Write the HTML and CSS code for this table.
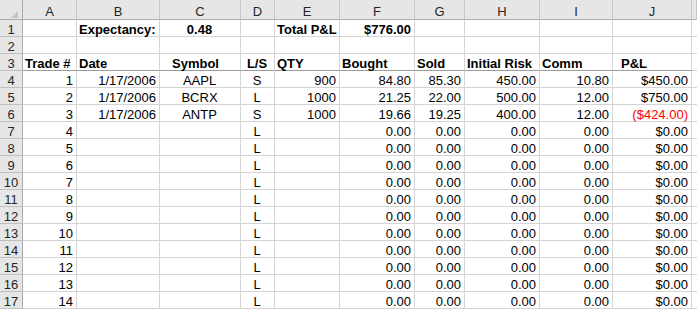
FILE: index.html
```html
<!DOCTYPE html>
<html>
<head>
<meta charset="utf-8">
<link rel="stylesheet" href="styles.css">
</head>
<body>
<div class="sheet">
  <div class="corner"><svg width="22" height="19" viewBox="0 0 22 19"><polygon points="18,11 18,18 11,18" fill="#c4c4c4"/></svg></div>
  <div class="ch">A</div><div class="ch">B</div><div class="ch">C</div><div class="ch">D</div><div class="ch">E</div><div class="ch">F</div><div class="ch">G</div><div class="ch">H</div><div class="ch">I</div><div class="ch">J</div><div class="ch"></div>

  <div class="rh">1</div><div class="c"></div><div class="c b">Expectancy:</div><div class="c b ctr">0.48</div><div class="c"></div><div class="c b">Total P&amp;L</div><div class="c b r">$776.00</div><div class="c"></div><div class="c"></div><div class="c"></div><div class="c"></div><div class="c"></div>

  <div class="rh">2</div><div class="c"></div><div class="c"></div><div class="c"></div><div class="c"></div><div class="c"></div><div class="c"></div><div class="c"></div><div class="c"></div><div class="c"></div><div class="c"></div><div class="c"></div>

  <div class="rh">3</div><div class="c b hd">Trade #</div><div class="c b hd">Date</div><div class="c b hd ctr sym">Symbol</div><div class="c b hd ctr">L/S</div><div class="c b hd">QTY</div><div class="c b hd">Bought</div><div class="c b hd">Sold</div><div class="c b hd">Initial Risk</div><div class="c b hd">Comm</div><div class="c b hd pl">P&amp;L</div><div class="c"></div>

  <div class="rh">4</div><div class="c r">1</div><div class="c r">1/17/2006</div><div class="c ctr">AAPL</div><div class="c ctr">S</div><div class="c r">900</div><div class="c r">84.80</div><div class="c r">85.30</div><div class="c r">450.00</div><div class="c r">10.80</div><div class="c r">$450.00</div><div class="c"></div>

  <div class="rh">5</div><div class="c r">2</div><div class="c r">1/17/2006</div><div class="c ctr">BCRX</div><div class="c ctr">L</div><div class="c r">1000</div><div class="c r">21.25</div><div class="c r">22.00</div><div class="c r">500.00</div><div class="c r">12.00</div><div class="c r">$750.00</div><div class="c"></div>

  <div class="rh">6</div><div class="c r">3</div><div class="c r">1/17/2006</div><div class="c ctr">ANTP</div><div class="c ctr">S</div><div class="c r">1000</div><div class="c r">19.66</div><div class="c r">19.25</div><div class="c r">400.00</div><div class="c r">12.00</div><div class="c r neg">($424.00)</div><div class="c"></div>

  <div class="rh">7</div><div class="c r">4</div><div class="c"></div><div class="c"></div><div class="c ctr">L</div><div class="c"></div><div class="c r">0.00</div><div class="c r">0.00</div><div class="c r">0.00</div><div class="c r">0.00</div><div class="c r">$0.00</div><div class="c"></div>

  <div class="rh">8</div><div class="c r">5</div><div class="c"></div><div class="c"></div><div class="c ctr">L</div><div class="c"></div><div class="c r">0.00</div><div class="c r">0.00</div><div class="c r">0.00</div><div class="c r">0.00</div><div class="c r">$0.00</div><div class="c"></div>

  <div class="rh">9</div><div class="c r">6</div><div class="c"></div><div class="c"></div><div class="c ctr">L</div><div class="c"></div><div class="c r">0.00</div><div class="c r">0.00</div><div class="c r">0.00</div><div class="c r">0.00</div><div class="c r">$0.00</div><div class="c"></div>

  <div class="rh">10</div><div class="c r">7</div><div class="c"></div><div class="c"></div><div class="c ctr">L</div><div class="c"></div><div class="c r">0.00</div><div class="c r">0.00</div><div class="c r">0.00</div><div class="c r">0.00</div><div class="c r">$0.00</div><div class="c"></div>

  <div class="rh">11</div><div class="c r">8</div><div class="c"></div><div class="c"></div><div class="c ctr">L</div><div class="c"></div><div class="c r">0.00</div><div class="c r">0.00</div><div class="c r">0.00</div><div class="c r">0.00</div><div class="c r">$0.00</div><div class="c"></div>

  <div class="rh">12</div><div class="c r">9</div><div class="c"></div><div class="c"></div><div class="c ctr">L</div><div class="c"></div><div class="c r">0.00</div><div class="c r">0.00</div><div class="c r">0.00</div><div class="c r">0.00</div><div class="c r">$0.00</div><div class="c"></div>

  <div class="rh">13</div><div class="c r">10</div><div class="c"></div><div class="c"></div><div class="c ctr">L</div><div class="c"></div><div class="c r">0.00</div><div class="c r">0.00</div><div class="c r">0.00</div><div class="c r">0.00</div><div class="c r">$0.00</div><div class="c"></div>

  <div class="rh">14</div><div class="c r">11</div><div class="c"></div><div class="c"></div><div class="c ctr">L</div><div class="c"></div><div class="c r">0.00</div><div class="c r">0.00</div><div class="c r">0.00</div><div class="c r">0.00</div><div class="c r">$0.00</div><div class="c"></div>

  <div class="rh">15</div><div class="c r">12</div><div class="c"></div><div class="c"></div><div class="c ctr">L</div><div class="c"></div><div class="c r">0.00</div><div class="c r">0.00</div><div class="c r">0.00</div><div class="c r">0.00</div><div class="c r">$0.00</div><div class="c"></div>

  <div class="rh">16</div><div class="c r">13</div><div class="c"></div><div class="c"></div><div class="c ctr">L</div><div class="c"></div><div class="c r">0.00</div><div class="c r">0.00</div><div class="c r">0.00</div><div class="c r">0.00</div><div class="c r">$0.00</div><div class="c"></div>

  <div class="rh">17</div><div class="c r">14</div><div class="c"></div><div class="c"></div><div class="c ctr">L</div><div class="c"></div><div class="c r">0.00</div><div class="c r">0.00</div><div class="c r">0.00</div><div class="c r">0.00</div><div class="c r">$0.00</div><div class="c"></div>
</div>
</body>
</html>
```

FILE: styles.css
```css
html, body {
  margin: 0;
  padding: 0;
  background: #ffffff;
  overflow: hidden;
}

body {
  width: 697px;
  height: 310px;
  font-family: "Liberation Sans", Arial, sans-serif;
  font-size: 13px;
  color: #000000;
}

.sheet {
  display: grid;
  grid-template-columns: 23px 54px 83px 81px 34px 65px 75px 50px 75px 73px 79px 5px;
  grid-template-rows: 20px repeat(17, 17px);
  width: 697px;
}

.corner {
  background: #e6e6e6;
  border-right: 1px solid #ababab;
  border-bottom: 1px solid #ababab;
  box-sizing: border-box;
}

.corner svg {
  display: block;
}

.ch {
  box-sizing: border-box;
  background: #e6e6e6;
  border-right: 1px solid #c8c8c8;
  border-bottom: 1px solid #ababab;
  text-align: center;
  line-height: 19px;
  padding-top: 2px;
  color: #262626;
  white-space: nowrap;
}

.rh {
  box-sizing: border-box;
  background: #e6e6e6;
  border-right: 1px solid #ababab;
  border-bottom: 1px solid #c0c0c0;
  text-align: center;
  line-height: 19px;
  color: #262626;
  white-space: nowrap;
}

.c {
  box-sizing: border-box;
  border-right: 1px solid #d4d4d4;
  border-bottom: 1px solid #d4d4d4;
  padding: 0 3px 0 2px;
  line-height: 19px;
  white-space: nowrap;
  overflow: visible;
}

.b {
  font-weight: bold;
}

.r {
  text-align: right;
}

.ctr {
  text-align: center;
}

.hd {
  border-bottom-color: #9c9c9c;
}

.sym {
  padding-right: 11px;
}

.pl {
  padding-left: 8px;
}

.neg {
  color: #ff0000;
}
```
